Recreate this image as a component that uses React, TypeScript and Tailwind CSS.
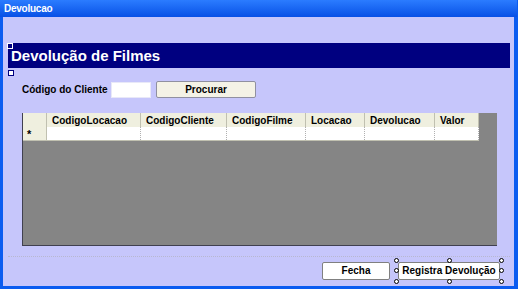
import React from "react";

const font = { fontFamily: '"Liberation Sans", Arial, sans-serif' };

const COLUMNS = [
  { label: "CodigoLocacao", w: "w-[94px]" },
  { label: "CodigoCliente", w: "w-[86px]" },
  { label: "CodigoFilme", w: "w-[79px]" },
  { label: "Locacao", w: "w-[59px]" },
  { label: "Devolucao", w: "w-[70px]" },
  { label: "Valor", w: "w-[44px]" },
];

function Handle({ className }: { className: string }) {
  return <span className={`absolute w-[5px] h-[5px] rounded-full bg-white border border-black ${className}`} />;
}

export default function App() {
  return (
    <div
      className="w-[518px] h-[289px] flex flex-col bg-[#0a5ff0] border-l-[3px] border-r-[4px] border-b-[3px] border-[#0b5cf0] text-black whitespace-nowrap"
      style={font}
    >
      {/* title bar */}
      <div className="h-[17px] shrink-0 -mx-[3px] px-[4px] flex items-center bg-gradient-to-b from-[#2b7cff] to-[#0850e6]">
        <span className="text-[10px] font-bold text-white leading-none tracking-tight">Devolucao</span>
      </div>

      {/* form body */}
      <div className="flex-1 flex flex-col bg-[#c6c6fb] relative">
        <div className="relative mt-[26px] ml-[5px] w-[502px] h-[25px] bg-[#000080] flex items-center pl-[3px]">
          <span className="text-[15px] font-bold text-white leading-none">Devolução de Filmes</span>
          <span className="absolute -left-[1px] top-[0px] w-[6px] h-[6px] border border-white bg-[#000080]" />
        </div>
        <div className="ml-[5px] mt-[2px] w-[6px] h-[6px] border border-[#000080] bg-white" />

        <div className="flex items-center mt-[5px] ml-[19px] h-[17px]">
          <span className="text-[10px] font-bold w-[89px]">Código do Cliente</span>
          <div className="w-[40px] h-[16px] bg-white border border-[#e8e8f8]" />
          <button className="ml-[5px] w-[100px] h-[17px] bg-[#f4f2e6] border border-[#9090a0] rounded-[2px] text-[10px] font-bold leading-none">
            Procurar
          </button>
        </div>

        {/* subform datasheet */}
        <div className="mt-[15px] ml-[19px] w-[475px] h-[133px] bg-[#858585] border-l border-b border-[#404050] flex flex-col">
          <div className="flex h-[14px] bg-[#efefdf] w-[456px]">
            <div className="w-[24px] border-r border-[#c0c0b0]" />
            {COLUMNS.map((c) => (
              <div key={c.label} className={`${c.w} border-r border-[#c0c0b0] text-[10px] font-bold leading-[15px] pl-[5px]`}>
                {c.label}
              </div>
            ))}
          </div>
          <div className="flex h-[14px] w-[456px] border-b border-[#c0c0b0]">
            <div className="w-[24px] bg-[#efefdf] border-r border-[#c0c0b0] text-[11px] font-bold leading-[15px] pl-[4px]">*</div>
            {COLUMNS.map((c) => (
              <div key={c.label} className={`${c.w} bg-white border-r border-dotted border-[#b0b0b0]`} />
            ))}
          </div>
        </div>

        <div className="mt-[10px] ml-[5px] w-[502px] border-t border-dotted border-[#b8b8d0]" />

        <div className="flex items-start justify-end mt-[5px] mr-[14px] gap-[8px]">
          <button className="w-[68px] h-[18px] bg-white border border-[#808080] rounded-[2px] text-[10px] font-bold leading-none">
            Fecha
          </button>
          <div className="relative flex">
            <button className="w-[102px] h-[18px] bg-white border border-[#808080] rounded-[2px] text-[10px] font-bold leading-none">
              Registra Devolução
            </button>
            <Handle className="-left-[4px] -top-[4px]" />
            <Handle className="left-[49px] -top-[4px]" />
            <Handle className="-right-[4px] -top-[4px]" />
            <Handle className="-left-[4px] top-[6px]" />
            <Handle className="-right-[4px] top-[6px]" />
            <Handle className="-left-[4px] -bottom-[4px]" />
            <Handle className="left-[49px] -bottom-[4px]" />
            <Handle className="-right-[4px] -bottom-[4px]" />
          </div>
        </div>
      </div>
    </div>
  );
}
